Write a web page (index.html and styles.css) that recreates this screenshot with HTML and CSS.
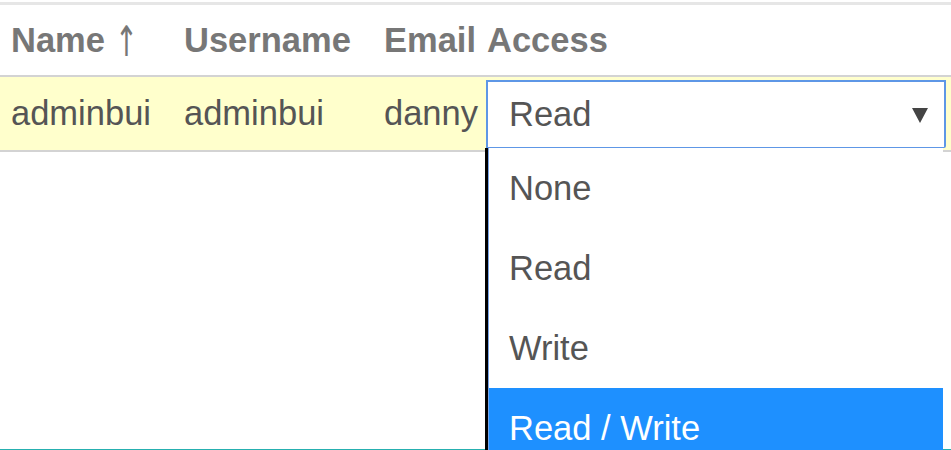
FILE: index.html
```html
<!DOCTYPE html>
<html lang='en'>
	<head>
		<meta charset='utf-8' />
		<title>Users</title>
		<link rel="stylesheet" href="styles.css">
	</head>
	<body>
		<div id="divUsers">
			<table class="userTable">
				<colgroup>
					<col class="colName" />
					<col class="colUsername" />
					<col class="colEmail" />
					<col />
				</colgroup>
				<thead>
					<tr>
						<th>Name <span class="sortArrow">&#8593;</span></th>
						<th>Username</th>
						<th>Email</th>
						<th class="cellAccess">Access</th>
					</tr>
				</thead>
				<tbody>
					<tr class="rowSelected">
						<td>adminbui</td>
						<td>adminbui</td>
						<td>danny</td>
						<td class="cellAccess">
							<div class="selectWrap">
								<div class="selectBox">
									<span>Read</span>
									<svg class="selectArrow" width="16" height="15" viewBox="0 0 16 15"><path d="M0 0 H16 L8 15 Z" fill="#444" /></svg>
								</div>
								<div class="selectList">
									<div class="selectListInner">
										<div class="option">None</div>
										<div class="option">Read</div>
										<div class="option">Write</div>
										<div class="option optionActive">Read / Write</div>
									</div>
								</div>
							</div>
						</td>
					</tr>
				</tbody>
			</table>
		</div>
	</body>
</html>
```

FILE: styles.css
```css
html, body {
	overflow: hidden;
}
body {
	margin: 0px;
	font-family: "Liberation Sans", Arial, sans-serif;
	font-size: 34.5px;
	color: #555;
}
#divUsers {
	margin-top: 2px;
	height: 444px;
	border-top: 3px solid #e6e6e6;
	border-bottom: 1px solid #26b0b0;
}
.userTable {
	width: 100%;
	border-collapse: collapse;
	table-layout: fixed;
}
.colName {
	width: 173px;
}
.colUsername {
	width: 200px;
}
.colEmail {
	width: 113px;
}
th {
	height: 70px;
	padding: 0 0 0 11px;
	text-align: left;
	color: #777;
	font-weight: bold;
	white-space: nowrap;
}
.sortArrow {
	font-family: "DejaVu Sans", sans-serif;
	font-weight: normal;
	font-size: 42px;
	line-height: 0;
	display: inline-block;
	transform: scaleX(0.65);
	transform-origin: left center;
	vertical-align: -4px;
}
td {
	height: 73px;
	padding: 0 0 0 11px;
	white-space: nowrap;
}
th.cellAccess, td.cellAccess {
	padding-left: 0;
}
th.cellAccess {
	padding-left: 1px;
}
.rowSelected {
	background: #ffffcc;
	border-top: 2px solid #d3d3d3;
	border-bottom: 2px solid #d3d3d3;
}
.selectWrap {
	position: relative;
	width: 460px;
}
.selectBox {
	height: 65px;
	display: flex;
	align-items: center;
	justify-content: space-between;
	padding: 0 16px 0 21px;
	background: #fff;
	border: 2px solid #5e97e6;
	border-bottom-width: 1px;
	border-radius: 0 0 2px 0;
}
.selectArrow {
	margin-top: 2px;
}
.selectList {
	position: absolute;
	top: 100%;
	left: -1px;
	width: 455px;
	height: 303px;
	overflow: hidden;
	border-left: 3px solid #000;
	background: #fff;
}
.selectListInner {
	border-left: 1px solid #7aa5e8;
}
.option {
	height: 80px;
	line-height: 80px;
	padding-left: 20px;
	color: #555;
}
.optionActive {
	background: #1e90ff;
	color: #fff;
}
```
